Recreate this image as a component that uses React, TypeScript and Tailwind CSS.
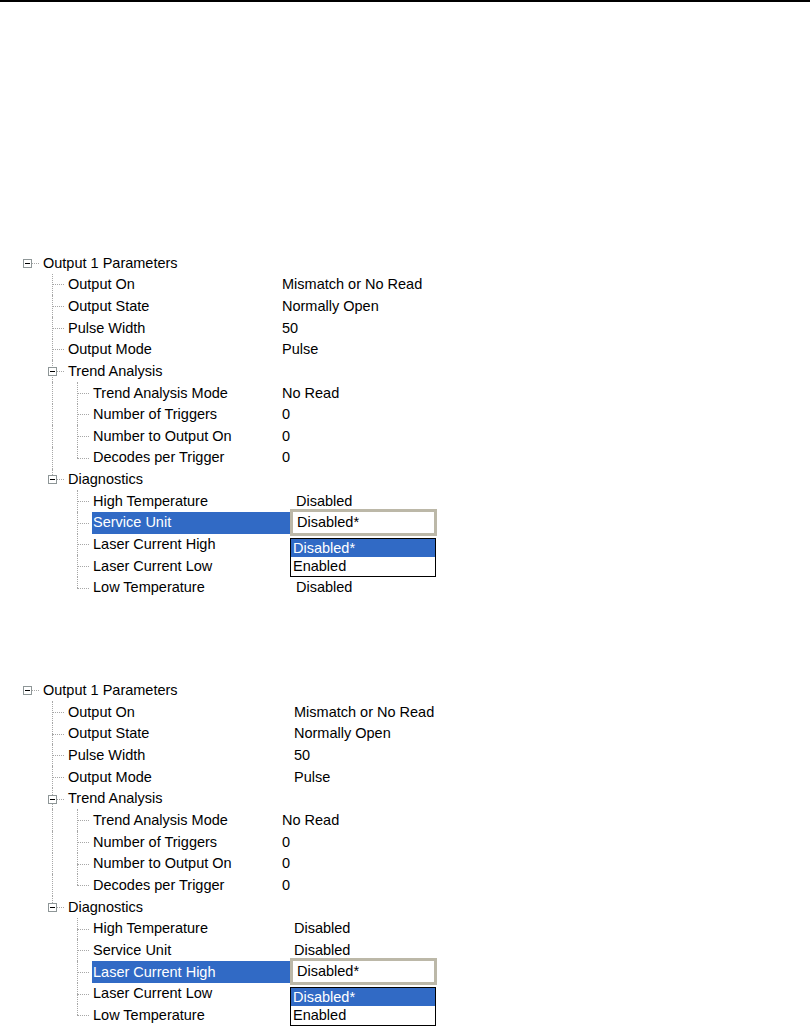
import React from "react";

type Row = {
  level: number;
  label: string;
  value?: string;
  box?: boolean;
  last?: boolean;
  rails?: boolean[];
  selected?: boolean;
  vx?: string;
};

const LINE = "border-[#a7a7a7] border-dotted";

function Cell({ kind, box }: { kind: "none" | "rail" | "mid" | "last" | "root"; box?: boolean }) {
  return (
    <div className="relative h-full w-[25px] flex-none">
      {kind === "rail" && <div className={`absolute left-[12px] top-0 bottom-0 border-l ${LINE}`} />}
      {kind === "mid" && <div className={`absolute left-[12px] top-0 bottom-0 border-l ${LINE}`} />}
      {kind === "last" && <div className={`absolute left-[12px] top-0 h-1/2 border-l ${LINE}`} />}
      {(kind === "mid" || kind === "last" || kind === "root") && (
        <div className={`absolute left-[12px] top-1/2 w-[12px] border-t ${LINE}`} />
      )}
      {box && (
        <div className="absolute left-[8px] top-[calc(50%-4px)] flex h-[9px] w-[9px] items-center justify-center border border-[#8e9697] bg-white">
          <div className="h-px w-[5px] bg-black" />
        </div>
      )}
    </div>
  );
}

function TreeRow({ r }: { r: Row }) {
  const cells: React.ReactNode[] = [];
  for (let k = 0; k < r.level; k++) {
    cells.push(<Cell key={k} kind={r.rails && r.rails[k] ? "rail" : "none"} />);
  }
  cells.push(
    <Cell key="own" kind={r.level === 0 ? "root" : r.last ? "last" : "mid"} box={r.box} />
  );
  return (
    <div className="flex h-[21.67px] items-center">
      <div className="flex h-full w-[290px] flex-none items-center pl-[15px]">
        {cells}
        <div className="flex h-full flex-1 items-center pl-[2px]">
          <div
            className={`flex h-[22px] flex-1 items-center pl-[1px] ${
              r.selected ? "bg-[#316ac5] text-white" : ""
            }`}
          >
            {r.label}
          </div>
        </div>
      </div>
      <div className={`relative flex h-full flex-1 items-center ${r.vx ?? ""}`}>
        {r.selected ? (
          <>
            <div className="absolute left-0 top-[-3px] z-10 flex h-[27px] w-[147px] items-center border-[3px] border-[#bcb8a8] bg-white pl-[4px]">
              Disabled*
            </div>
            <div className="absolute left-0 top-[26px] z-10 w-[146px] border border-black bg-white">
              <div className="flex h-[18px] items-center bg-[#316ac5] pl-[2px] text-white">Disabled*</div>
              <div className="flex h-[19px] items-center pl-[2px]">Enabled</div>
            </div>
          </>
        ) : (
          r.value
        )}
      </div>
    </div>
  );
}

function buildRows(sel: string, v1: string, v2: string, v3: string): Row[] {
  const t = [false, true];
  const d = [false, false];
  const first = sel === "Service Unit";
  return [
    { level: 0, label: "Output 1 Parameters", box: true },
    { level: 1, label: "Output On", value: "Mismatch or No Read", vx: v1 },
    { level: 1, label: "Output State", value: "Normally Open", vx: v1 },
    { level: 1, label: "Pulse Width", value: "50", vx: v1 },
    { level: 1, label: "Output Mode", value: "Pulse", vx: v1 },
    { level: 1, label: "Trend Analysis", box: true },
    { level: 2, label: "Trend Analysis Mode", value: "No Read", rails: t, vx: v2 },
    { level: 2, label: "Number of Triggers", value: "0", rails: t, vx: v2 },
    { level: 2, label: "Number to Output On", value: "0", rails: t, vx: v2 },
    { level: 2, label: "Decodes per Trigger", value: "0", rails: t, last: true, vx: v2 },
    { level: 1, label: "Diagnostics", box: true, last: true },
    { level: 2, label: "High Temperature", value: "Disabled", rails: d, vx: v3 },
    { level: 2, label: "Service Unit", value: "Disabled", rails: d, vx: v3, selected: first },
    { level: 2, label: "Laser Current High", value: first ? "" : "Disabled", rails: d, vx: v3, selected: !first },
    { level: 2, label: "Laser Current Low", value: "", rails: d, vx: v3 },
    { level: 2, label: "Low Temperature", value: first ? "Disabled" : "", rails: d, last: true, vx: v3 },
  ];
}

function Tree({ rows }: { rows: Row[] }) {
  return (
    <div className="flex flex-col">
      {rows.map((r, i) => (
        <TreeRow key={i} r={r} />
      ))}
    </div>
  );
}

export default function App() {
  const a = buildRows("Service Unit", "-ml-[8px]", "-ml-[8px]", "pl-[6px]");
  const b = buildRows("Laser Current High", "pl-[4px]", "-ml-[8px]", "pl-[4px]");
  return (
    <div className="flex min-h-[1031px] w-[810px] flex-col bg-white font-['Liberation_Sans',Arial,sans-serif] text-[14.5px] leading-none text-black">
      <div className="h-[2px] w-full bg-black" />
      <div className="mt-[250px]">
        <Tree rows={a} />
      </div>
      <div className="mt-[81px]">
        <Tree rows={b} />
      </div>
    </div>
  );
}
